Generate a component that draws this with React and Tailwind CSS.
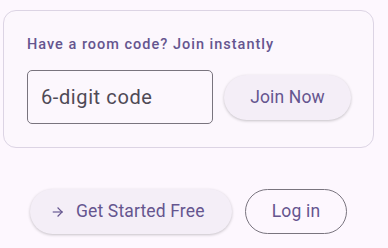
import React, { useState } from "react";

function ArrowIcon() {
  return (
    <svg width="14" height="14" viewBox="0 0 24 24" fill="none" stroke="currentColor" strokeWidth="2" strokeLinecap="square">
      <path d="M4 12h15" />
      <path d="M12 5l7 7-7 7" />
    </svg>
  );
}

export default function App() {
  const [code, setCode] = useState("");

  return (
    <div className="min-h-[248px] w-[388px] bg-[#fdf7fe] pt-[10px] pl-[3px] font-['Roboto',sans-serif]">
      <div className="w-[371px]">
        <section className="rounded-[13px] border border-[#dcd4e4] bg-[#fcf7fd] pt-[24px] pb-[23px] pl-[23px]">
          <p className="text-[14.5px] leading-[20px] font-medium tracking-[1px] text-[#65558f]">
            Have a room code? Join instantly
          </p>
          <div className="mt-[15px] flex items-center gap-[11px]">
            <input
              value={code}
              onChange={(e) => setCode(e.target.value)}
              placeholder="6-digit code"
              className="h-[54px] w-[186px] rounded-[5px] border border-[#79747e] bg-transparent px-[13px] text-[20px] tracking-[0.6px] text-[#1d1b20] placeholder:text-[#4f4a56] outline-none"
            />
            <button className="h-[45px] w-[127px] rounded-full bg-[#f4eef7] text-[17.5px] font-normal tracking-[0.15px] text-[#65558f] shadow-[0_1px_3px_rgba(0,0,0,0.22)]">
              Join Now
            </button>
          </div>
        </section>

        <div className="mt-[41px] flex justify-center gap-[13px]">
          <button className="flex h-[45px] w-[202px] items-center rounded-full bg-[#f4eef7] pl-[20px] text-[17.5px] font-normal tracking-[0.15px] text-[#65558f] shadow-[0_1px_3px_rgba(0,0,0,0.22)]">
            <span className="flex w-[16px] justify-center">
              <ArrowIcon />
            </span>
            <span className="ml-[10px]">Get Started Free</span>
          </button>
          <button className="h-[45px] w-[102px] rounded-full border border-[#79747e] text-[17.5px] font-normal tracking-[0.15px] text-[#65558f]">
            Log in
          </button>
        </div>
      </div>
    </div>
  );
}
